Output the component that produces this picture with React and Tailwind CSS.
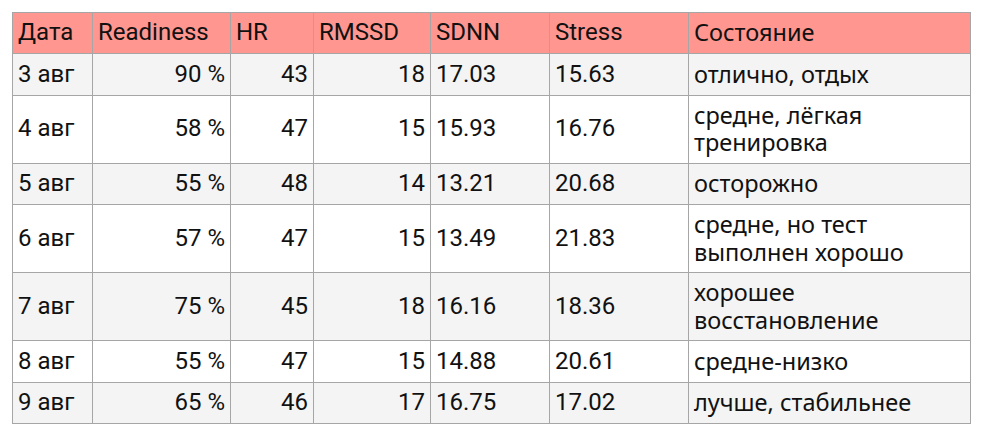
import React from "react";

const rows = [
  ["3 авг", "90 %", "43", "18", "17.03", "15.63", "отлично, отдых"],
  ["4 авг", "58 %", "47", "15", "15.93", "16.76", "средне, лёгкая тренировка"],
  ["5 авг", "55 %", "48", "14", "13.21", "20.68", "осторожно"],
  ["6 авг", "57 %", "47", "15", "13.49", "21.83", "средне, но тест выполнен хорошо"],
  ["7 авг", "75 %", "45", "18", "16.16", "18.36", "хорошее восстановление"],
  ["8 авг", "55 %", "47", "15", "14.88", "20.61", "средне-низко"],
  ["9 авг", "65 %", "46", "17", "16.75", "17.02", "лучше, стабильнее"],
];

const heads = ["Дата", "Readiness", "HR", "RMSSD", "SDNN", "Stress", "Состояние"];
const widths = ["w-[80px]", "w-[138px]", "w-[83px]", "w-[117px]", "w-[119px]", "w-[139px]", "w-[282px]"];
const align = ["text-left", "text-right", "text-right", "text-right", "text-left", "text-left", "text-left"];

export default function App() {
  return (
    <div className="bg-white w-[982px] h-[432px] pt-[12px] pl-[12px]">
      <table
        className="table-fixed border-collapse w-[959px] text-[#111] text-[24px] leading-[27.5px]"
        style={{ fontFamily: "Roboto, 'Noto Sans', sans-serif" }}
      >
        <colgroup>
          {widths.map((w, i) => (
            <col key={i} className={w} />
          ))}
        </colgroup>
        <thead>
          <tr className="bg-[#ff968f] h-[41px]">
            {heads.map((h, i) => (
              <th
                key={i}
                className={`border border-[#a6a6a6] font-normal text-left px-[5px] align-middle ${i === 6 ? "font-['Noto_Sans',sans-serif] text-[23.5px]" : ""}`}
              >
                {h}
              </th>
            ))}
          </tr>
        </thead>
        <tbody>
          {rows.map((r, ri) => (
            <tr key={ri} className={ri % 2 === 0 ? "bg-[#f4f4f4]" : "bg-white"}>
              {r.map((c, ci) => (
                <td
                  key={ci}
                  className={`border border-[#a6a6a6] px-[5px] py-[6px] h-[41.5px] align-middle ${align[ci]} ${ci === 6 ? "font-['Noto_Sans',sans-serif] text-[23.5px]" : ""}`}
                >
                  {c}
                </td>
              ))}
            </tr>
          ))}
        </tbody>
      </table>
    </div>
  );
}
